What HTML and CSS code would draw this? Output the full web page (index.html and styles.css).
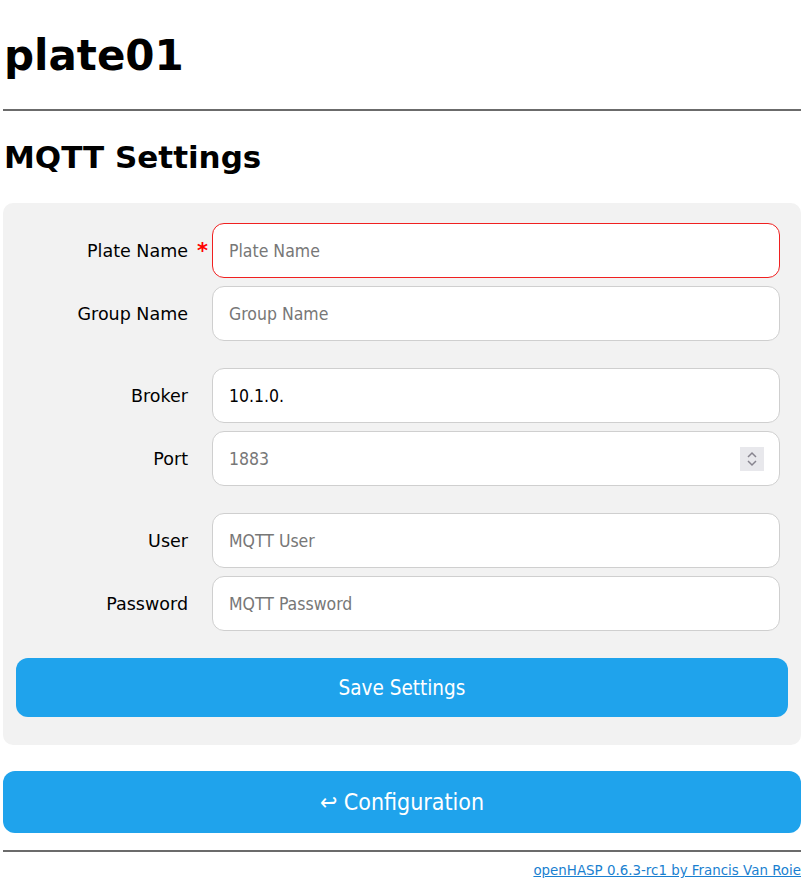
FILE: index.html
```html
<!DOCTYPE html>
<html>
<head>
<meta charset="utf-8">
<link rel="stylesheet" href="styles.css">
</head>
<body>
<div class="page">
  <h1 class="title">plate01</h1>
  <hr class="rule">
  <h2 class="subtitle">MQTT Settings</h2>
  <form class="card">
    <div class="group">
      <div class="row">
        <label class="label">Plate Name <span class="req">*</span></label>
        <div class="field invalid"><input class="input" placeholder="Plate Name"></div>
      </div>
      <div class="row">
        <label class="label">Group Name</label>
        <div class="field"><input class="input" placeholder="Group Name"></div>
      </div>
    </div>
    <div class="group">
      <div class="row">
        <label class="label">Broker</label>
        <div class="field"><input class="input" value="10.1.0."></div>
      </div>
      <div class="row">
        <label class="label">Port</label>
        <div class="field"><input class="input" placeholder="1883"><span class="spin"><svg width="12" height="20" viewBox="0 0 12 20"><path d="M2 8 L6 4 L10 8" fill="none" stroke="#87848f" stroke-width="1.5"/><path d="M2 12 L6 16 L10 12" fill="none" stroke="#87848f" stroke-width="1.5"/></svg></span></div>
      </div>
    </div>
    <div class="group">
      <div class="row">
        <label class="label">User</label>
        <div class="field"><input class="input" placeholder="MQTT User"></div>
      </div>
      <div class="row">
        <label class="label">Password</label>
        <div class="field"><input class="input" type="password" placeholder="MQTT Password"></div>
      </div>
    </div>
    <button type="button" class="btn save">Save Settings</button>
  </form>
  <button type="button" class="btn config">&#8617; Configuration</button>
  <hr class="rule bottom">
  <div class="footer"><a href="#" class="link">openHASP 0.6.3-rc1 by Francis Van Roie</a></div>
</div>
</body>
</html>
```
FILE: styles.css
```css
html, body { margin: 0; padding: 0; background: #fff; }
body { font-family: "DejaVu Sans", Verdana, sans-serif; color: #000; }
.page { width: 798px; padding-left: 3px; }
.title { font-size: 42px; font-weight: bold; margin: 0; padding: 28px 0 0 1px; line-height: 56px; height: 70px; }
.rule { border: 0; border-top: 2px solid #6b6b6b; margin: 11px 0 0 0; height: 0; }
.subtitle { font-size: 31px; font-weight: bold; margin: 0; padding: 24px 0 0 1px; line-height: 44px; }
.card { background: #f2f2f2; border-radius: 10px; padding: 20px 13px 28px 13px; margin-top: 24px; display: flex; flex-direction: column; }
.group { display: flex; flex-direction: column; gap: 8px; margin: 0 8px 27px 0; }
.row { display: flex; align-items: center; }
.label { width: 172px; text-align: right; font-size: 17.5px; padding-right: 24px; position: relative; }
.req { color: #f00; position: absolute; right: 4px; top: -2px; font-size: 21px; font-weight: bold; }
.field { flex: 1; height: 53px; background: #fff; border: 1px solid #cfcfcf; border-radius: 12px; display: flex; align-items: center; padding: 0 15px 0 16px; }
.field.invalid { border-color: #f02020; }
.input { flex: 1; min-width: 0; border: 0; outline: 0; background: transparent; font-family: "DejaVu Sans Condensed", "DejaVu Sans", sans-serif; font-size: 17.5px; color: #000; padding: 0; }
.input::placeholder { color: #777; }
.spin { width: 24px; height: 24px; background: #e8e8ec; display: flex; align-items: center; justify-content: center; }
.btn { display: block; border: 0; background: #1fa3ec; color: #fff; border-radius: 12px; font-family: "DejaVu Sans Condensed", "DejaVu Sans", sans-serif; cursor: pointer; }
.save { height: 59px; font-size: 20.5px; }
.config { width: 798px; height: 62px; font-size: 23px; margin-top: 26px; }
.rule.bottom { margin-top: 17px; }
.footer { text-align: right; padding-top: 11px; font-size: 13.4px; }
.link { color: #1a7fd0; text-decoration: underline; }
```
